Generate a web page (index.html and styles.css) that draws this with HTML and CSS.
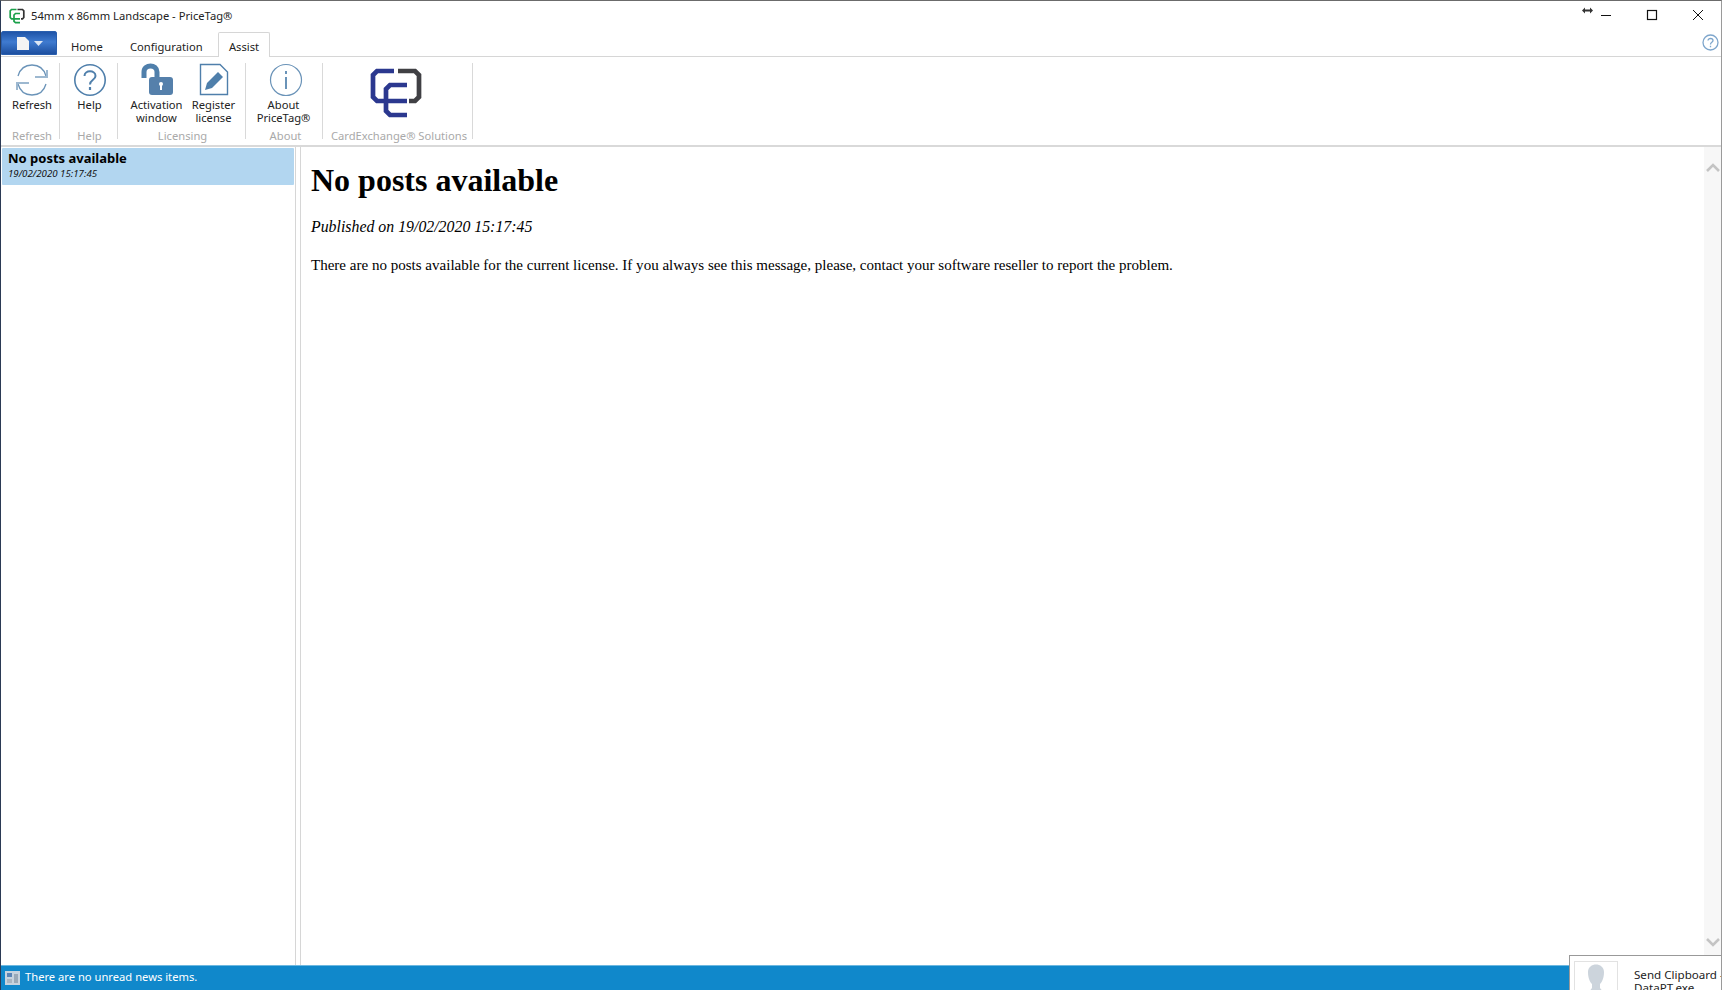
FILE: index.html
```html
<!DOCTYPE html>
<html lang="en">
<head>
<meta charset="utf-8">
<title>PriceTag</title>
<link rel="stylesheet" href="styles.css">
</head>
<body>
<div class="window">
  <header class="titlebar">
    <svg class="app-icon" viewBox="0 0 16 16" fill="none" stroke-width="1.7">
      <path d="M7.5 1.5H2.5L1.2 2.8V9.5L2.5 10.8H11M11 5.5H6.5L5 7V13.3L6.5 14.6H11M6 10.8H11" stroke="#1aa04a"/>
      <path d="M8.5 1.5H13.5L14.8 2.8V9.5L13.5 10.8H12" stroke="#333"/>
    </svg>
    <span class="title-text">54mm x 86mm Landscape - PriceTag®</span>
    <svg class="resize-mark" viewBox="0 0 11 7" fill="#333"><path d="M0 3.5L3 0.5V2.5H8V0.5L11 3.5L8 6.5V4.5H3V6.5Z"/></svg>
    <div class="winctl">
      <svg class="ctl" viewBox="0 0 46 20" fill="none" stroke="#111"><path d="M18 10.5H28"/></svg>
      <svg class="ctl" viewBox="0 0 46 20" fill="none" stroke="#111" stroke-width="1.2"><rect x="18.5" y="5.5" width="9" height="9"/></svg>
      <svg class="ctl" viewBox="0 0 46 20" fill="none" stroke="#111"><path d="M18 5L28 15M28 5L18 15"/></svg>
    </div>
  </header>

  <nav class="tabs">
    <div class="app-btn">
      <svg width="14" height="15" viewBox="0 0 14 15"><path d="M1 1H9L13 5V14H1Z" fill="#f4f4f4"/></svg>
      <svg width="9" height="5" viewBox="0 0 9 5"><path d="M0 0H9L4.5 5Z" fill="#dce6f4"/></svg>
    </div>
    <span class="tab tab-home">Home</span>
    <span class="tab tab-config">Configuration</span>
    <span class="tab tab-active">Assist</span>
    <svg class="help-mini" viewBox="0 0 17 17" fill="none" stroke="#7ea6cc" stroke-width="1.3">
      <circle cx="8.5" cy="8.5" r="7.5"/>
      <path d="M6 6.6C6 3.8 11 3.8 11 6.6C11 8.4 8.5 8.2 8.5 10.4M8.5 11.8V13.2"/>
    </svg>
  </nav>

  <section class="ribbon">
    <div class="group g-refresh">
      <div class="items">
        <div class="item i-refresh">
          <svg class="icon" viewBox="0 0 34 34" fill="none" stroke="#6a93b8" stroke-width="1.3">
            <path d="M3 13C5 6 10 2 17 2C24 2 29 6 31 13"/>
            <path d="M31 21C29 28 24 32 17 32C10 32 5 28 3 21"/>
            <path d="M20 14H32V7" stroke="#9db8d0" stroke-width="2"/>
            <path d="M14 20H2V27" stroke="#9db8d0" stroke-width="2"/>
          </svg>
          <span class="label">Refresh</span>
        </div>
      </div>
      <div class="group-label">Refresh</div>
    </div>
    <div class="group g-help">
      <div class="items">
        <div class="item i-help">
          <svg class="icon" viewBox="0 0 34 34" fill="none" stroke="#4f7fab" stroke-width="1.6">
            <circle cx="17" cy="17" r="15.2"/>
            <path d="M11.5 13C11.5 6.8 22.5 6.8 22.5 13C22.5 17 17 16.5 17 21.5" stroke-width="2"/>
            <path d="M17 24V27" stroke-width="2.2"/>
          </svg>
          <span class="label">Help</span>
        </div>
      </div>
      <div class="group-label">Help</div>
    </div>
    <div class="group g-lic">
      <div class="items">
        <div class="item i-activation">
          <svg class="icon" viewBox="0 0 34 34">
            <path d="M4 15V9C4 1 17 1 17 9V14" fill="none" stroke="#4f7fab" stroke-width="5"/>
            <rect x="9" y="14" width="24" height="18" rx="3" fill="#5580ab"/>
            <circle cx="21" cy="21" r="2" fill="#fff"/><rect x="20" y="21" width="2" height="6" fill="#fff"/>
          </svg>
          <span class="label">Activation<br>window</span>
        </div>
        <div class="item i-register">
          <svg class="icon" viewBox="0 0 34 34">
            <path d="M3.5 1.5H23L30.5 9V31.5H3.5Z" fill="#fff" stroke="#4f7fab" stroke-width="1.4"/>
            <path d="M8 27L10 20L21 9L26 14L15 25Z" fill="#4f7fab"/>
          </svg>
          <span class="label">Register<br>license</span>
        </div>
      </div>
      <div class="group-label">Licensing</div>
    </div>
    <div class="group g-about">
      <div class="items">
        <div class="item i-about">
          <svg class="icon about-icon" viewBox="0 0 34 34" fill="none" stroke="#6a93b8" stroke-width="1.2">
            <circle cx="17" cy="17" r="15.5"/>
            <path d="M17 14V26" stroke-width="2"/><path d="M17 8V11" stroke-width="2"/>
          </svg>
          <span class="label">About<br>PriceTag®</span>
        </div>
      </div>
      <div class="group-label">About</div>
    </div>
    <div class="group g-ce">
      <div class="items">
        <svg class="ce-logo" viewBox="0 0 52 52" fill="none" stroke-width="4.7">
          <path d="M24 3H7L3 7V29L7 33H37M37 17H20L16 21V43L20 47H37" stroke="#2b388f"/>
          <path d="M28 3H45L49 7V29L45 33H39" stroke="#404044"/>
        </svg>
      </div>
      <div class="group-label">CardExchange® Solutions</div>
    </div>
  </section>

  <main class="body">
    <aside class="list">
      <div class="post">
        <div class="post-title">No posts available</div>
        <div class="post-date">19/02/2020 15:17:45</div>
      </div>
    </aside>
    <div class="splitter"></div>
    <article class="content">
      <h1>No posts available</h1>
      <p class="published">Published on 19/02/2020 15:17:45</p>
      <p class="text">There are no posts available for the current license. If you always see this message, please, contact your software reseller to report the problem.</p>
    </article>
    <div class="scroll">
      <svg class="chev" viewBox="0 0 14 9" fill="none" stroke="#c4c4c4" stroke-width="2.6"><path d="M1 8L7 2L13 8"/></svg>
      <svg class="chev" viewBox="0 0 14 9" fill="none" stroke="#c4c4c4" stroke-width="2.6"><path d="M1 1L7 7L13 1"/></svg>
    </div>
  </main>

  <footer class="status">
    <svg class="status-icon" viewBox="0 0 15 14"><rect width="15" height="14" fill="#c7d3de"/><rect x="2" y="2" width="5" height="4" fill="#5b84b5"/><rect x="9" y="3" width="4" height="9" fill="#9aa9b7"/><rect x="2" y="8" width="5" height="4" fill="#aab6c2"/></svg>
    <span>There are no unread news items.</span>
  </footer>

  <div class="toast">
    <div class="avatar">
      <svg viewBox="0 0 42 34" width="42" height="34"><path d="M13 8C13 -2 29 -2 29 8C29 14 27 18 25 20V24L33 34H9L17 24V20C15 18 13 14 13 8Z" fill="#ccd4dc"/></svg>
    </div>
    <div class="toast-text">Send Clipboard -<br>DataPT.exe</div>
  </div>
</div>
</body>
</html>
```

FILE: styles.css
```css
* { box-sizing: border-box; }
html, body { margin: 0; height: 100%; overflow: hidden; background: #fff; }
body { font-family: "Noto Sans", "Open Sans", sans-serif; font-size: 11.2px; color: #222; }

.window {
  position: relative;
  width: 1722px;
  height: 990px;
  display: flex;
  flex-direction: column;
  border-top: 1px solid #6b6b6b;
  border-left: 1px solid #2b3a55;
  border-right: 1px solid #9a9a9a;
  overflow: hidden;
}

.titlebar { height: 29px; display: flex; align-items: center; padding-left: 8px; flex: none; }
.app-icon { width: 16px; height: 16px; margin-right: 6px; }
.title-text { font-size: 11.2px; }
.resize-mark { margin-left: auto; width: 11px; height: 7px; margin-right: -10px; margin-top: -11px; }
.winctl { display: flex; margin-top: -2px; }
.ctl { width: 46px; height: 20px; display: block; }

.tabs { height: 27px; flex: none; display: flex; align-items: flex-end; border-bottom: 1px solid #d6d6d6; position: relative; }
.app-btn {
  width: 56px; height: 24px; margin-bottom: 1px;
  display: flex; align-items: center; justify-content: center; gap: 4px;
  border-radius: 2px 2px 0 0;
  background: linear-gradient(#1f54a8, #3f7bd0 45%, #1d4f9f);
  border: 1px solid #2a5fae;
}
.tab { height: 26px; line-height: 25px; padding-top: 4px; font-size: 11.2px; color: #222; }
.tab-home { margin-left: 14px; width: 59px; }
.tab-config { width: 88px; }
.tab-active {
  width: 52px; text-align: center; background: #fff; height: 25px; margin-bottom: -1px;
  line-height: 24px; padding-top: 2px;
  border: 1px solid #d6d6d6; border-bottom: 0; border-radius: 2px 2px 0 0;
}
.help-mini { width: 17px; height: 17px; margin-left: auto; margin-right: 2px; margin-bottom: 5px; }

.ribbon { height: 90px; flex: none; display: flex; padding-top: 6px; border-bottom: 2px solid #d9d9d9; }
.group { display: flex; flex-direction: column; height: 76px; border-right: 1px solid #d9d9d9; align-items: center; flex: none; }
.items { display: flex; height: 66px; flex: none; }
.group-label { font-size: 11.2px; color: #a9a9a9; line-height: 14px; white-space: nowrap; flex: none; }
.g-refresh { width: 59px; padding-left: 4px; }
.g-help { width: 58px; padding-left: 2px; }
.g-lic { width: 128px; padding-left: 2px; }
.g-about { width: 77px; padding-left: 3px; }
.g-ce { width: 150px; padding-left: 3px; }
.item { display: flex; flex-direction: column; align-items: center; text-align: center; }
.i-activation { width: 64px; margin-left: -2px; }
.i-register { width: 50px; }
.i-about { width: 70px; padding-right: 4px; }
.icon { width: 34px; height: 34px; display: block; margin-bottom: 1px; flex: none; }
.about-icon { margin-left: 4px; }
.label { font-size: 11.2px; line-height: 13px; white-space: nowrap; }
.ce-logo { width: 52px; height: 52px; margin-top: 5px; margin-left: -6px; }

.body { flex: 1; display: flex; min-height: 0; }
.list { width: 294px; padding: 1px 1px 0 1px; flex: none; }
.post { height: 37px; background: #b2d6f0; padding: 2px 6px; border-radius: 1px; }
.post-title { font-size: 13px; font-weight: bold; color: #000; line-height: 17px; }
.post-date { font-size: 9.7px; font-style: italic; color: #111; line-height: 13px; }
.splitter { width: 6px; flex: none; border-left: 1px solid #d6d6d6; border-right: 1px solid #d6d6d6; }
.content { flex: 1; padding: 0 10px; color: #000; font-family: "Liberation Serif", serif; min-width: 0; }
.content h1 { font-size: 32px; line-height: 37px; margin: 15px 0 0; font-weight: bold; }
.published { font-size: 15.85px; line-height: 18px; font-style: italic; margin: 19px 0 0; }
.text { font-size: 15.04px; line-height: 18px; margin: 20px 0 0; }
.scroll { width: 17px; flex: none; background: #f7f7f7; display: flex; flex-direction: column; justify-content: space-between; align-items: center; padding: 16px 0 18px; }
.chev { width: 14px; height: 9px; display: block; }

.status { height: 25px; flex: none; display: flex; align-items: center; gap: 5px; padding: 0 0 3px 4px; background: #1088cb; border-top: 1px solid #6db8e0; color: #fff; font-size: 11.2px; }
.status-icon { width: 15px; height: 14px; margin-top: 3px; }

.toast {
  position: absolute; right: 0; bottom: 0; width: 152px; height: 35px;
  display: flex; gap: 16px; padding: 5px 0 0 4px; background: #fff;
  border-top: 1px solid #999; border-left: 1px solid #999; overflow: hidden;
}
.avatar { width: 44px; height: 40px; flex: none; border: 1px solid #e2e2e2; padding-top: 2px; }
.avatar svg { display: block; }
.toast-text { font-size: 11.6px; line-height: 13px; white-space: nowrap; padding-top: 7px; color: #222; }
```
